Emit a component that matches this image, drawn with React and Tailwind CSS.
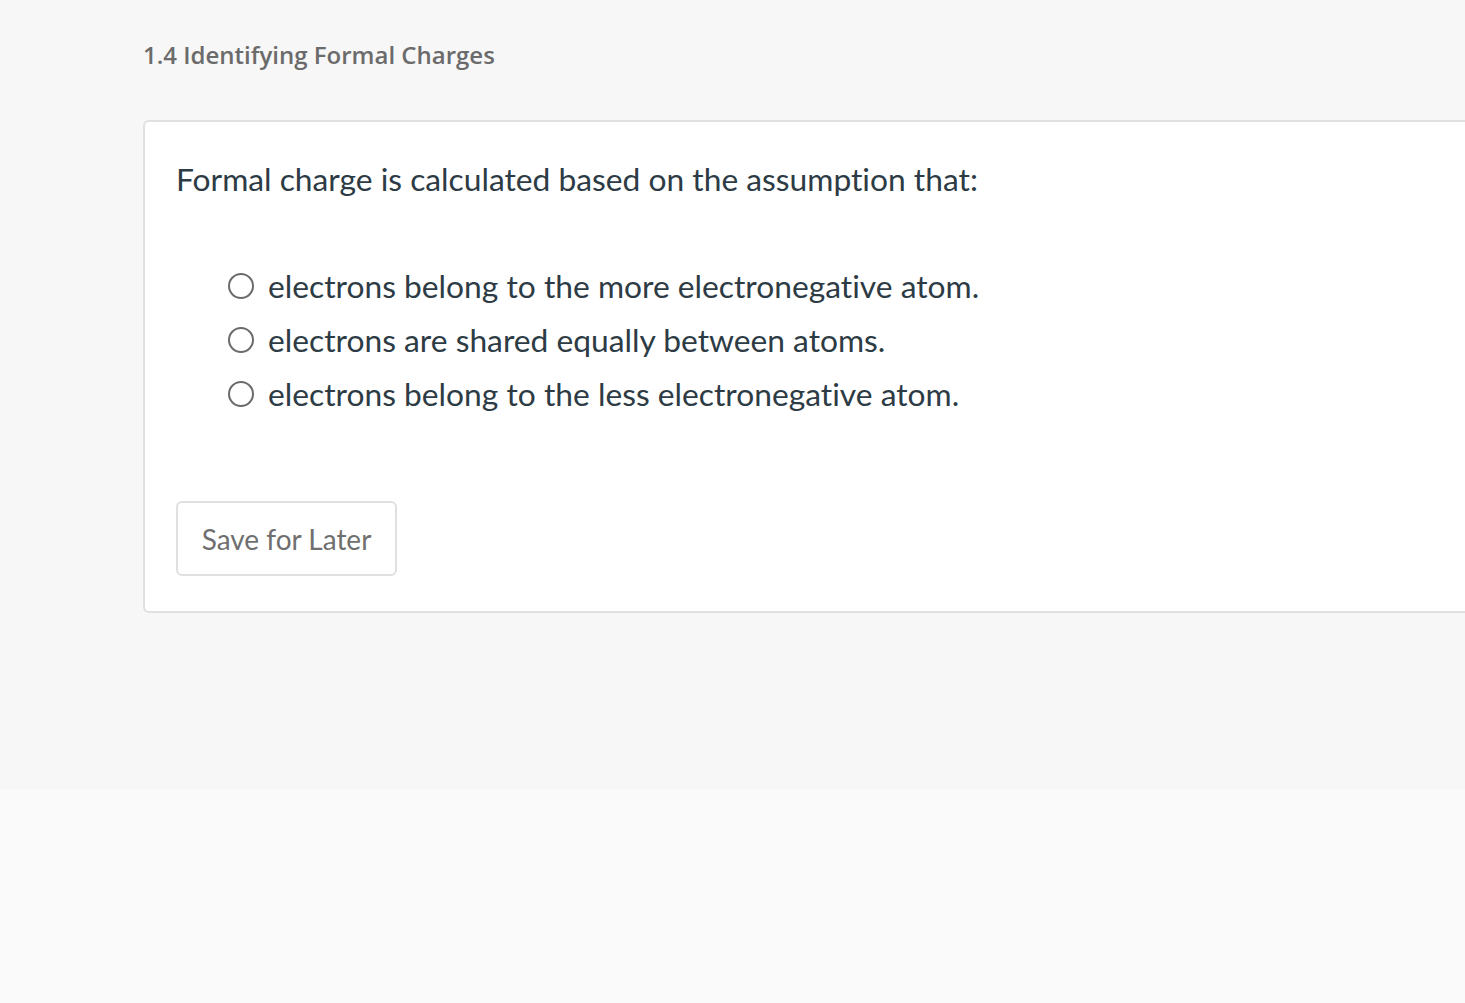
import React from 'react'

const OPTIONS = [
  'electrons belong to the more electronegative atom.',
  'electrons are shared equally between atoms.',
  'electrons belong to the less electronegative atom.',
]

function Radio() {
  return <span className="block h-[26px] w-[26px] shrink-0 rounded-full border-2 border-[#6b6b6b] bg-white" />
}

export default function App() {
  return (
    <div className="min-h-[1003px] w-full overflow-hidden bg-[#fafafa]">
      <div className="h-[789px] bg-[#f7f7f7] pl-[143px] pt-[36px]">
        <h1 className="font-['Open_Sans',sans-serif] text-[24px] font-semibold leading-[38px] text-[#6b6b6b]">
          1.4 Identifying Formal Charges
        </h1>
        <div className="mt-[46px] w-[1400px] rounded-[6px] border-2 border-[#e0e0e0] bg-white pl-[31px] pt-[37px] pb-[35px] font-['Lato',sans-serif] [font-variant-ligatures:none]">
          <p className="text-[31.75px] leading-[40px] text-[#2d3b45]">
            Formal charge is calculated based on the assumption that:
          </p>
          <div className="mt-[67px] flex flex-col gap-[14px] pl-[52px]">
            {OPTIONS.map(opt => (
              <label key={opt} className="flex items-center gap-[14px]">
                <Radio />
                <span className="text-[31.75px] leading-[40px] text-[#2d3b45]">{opt}</span>
              </label>
            ))}
          </div>
          <button className="mt-[87px] h-[75px] w-[221px] rounded-[6px] border-2 border-[#e0e0e0] bg-white text-[28px] text-[#6f6f6f]">
            Save for Later
          </button>
        </div>
      </div>
    </div>
  )
}
